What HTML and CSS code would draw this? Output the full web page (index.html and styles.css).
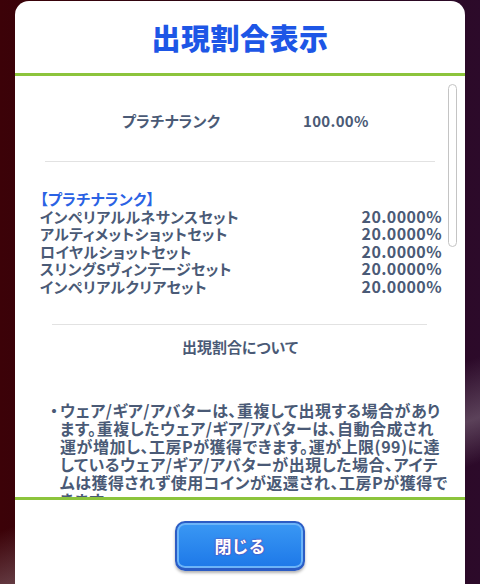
FILE: index.html
```html
<!DOCTYPE html>
<html lang="ja">
<head>
    <meta charset="UTF-8">
    <meta name="viewport" content="width=device-width, initial-scale=1.0">
    <title>出現割合表示</title>
    <link rel="stylesheet" href="styles.css">
</head>
<body>

    <div class="dialog">
        <div class="dialog-head">
            <h1>出現割合表示</h1>
        </div>

        <div class="dialog-body">
            <div class="rank-row">
                <span>プラチナランク</span>
                <span>100.00%</span>
            </div>

            <hr class="divider">

            <div class="rate-list">
                <div class="rate-group">【プラチナランク】</div>
                <div class="rate-row"><span>インペリアルルネサンスセット</span><span class="rate">20.0000%</span></div>
                <div class="rate-row"><span>アルティメットショットセット</span><span class="rate">20.0000%</span></div>
                <div class="rate-row"><span>ロイヤルショットセット</span><span class="rate">20.0000%</span></div>
                <div class="rate-row"><span>スリングSヴィンテージセット</span><span class="rate">20.0000%</span></div>
                <div class="rate-row"><span>インペリアルクリアセット</span><span class="rate">20.0000%</span></div>
            </div>

            <hr class="divider divider-narrow">

            <h2>出現割合について</h2>

            <p class="note">
                <span class="note-mark">・</span>
                <span>ウェア/ギア/アバターは、重複して出現する場合があり<br>ます。重複したウェア/ギア/アバターは、自動合成され<br>運が増加し、工房Pが獲得できます。運が上限(99)に達<br>しているウェア/ギア/アバターが出現した場合、アイテ<br>ムは獲得されず使用コインが返還され、工房Pが獲得で<br>きます。</span>
            </p>

            <!-- スクロールバー -->
            <div class="scrollbar"></div>
        </div>

        <div class="dialog-foot">
            <button class="btn-close">閉じる</button>
        </div>
    </div>

</body>
</html>
```

FILE: styles.css
```css
body {
    margin: 0;
    padding: 0;
    height: 584px;
    overflow: hidden;
    font-family: "Noto Sans CJK JP", "Noto Sans", sans-serif;
    font-weight: bold;
    color: #4a5a76;
    background:
        linear-gradient(160deg, transparent 70%, rgba(180, 170, 180, 0.35) 78%, transparent 84%),
        linear-gradient(90deg, #3c0208 0%, #2a0412 50%, #2c0a2a 100%);
}

.dialog {
    margin: 1px 15px 0;
    height: 600px;
    background-color: white;
    border-radius: 14px 14px 0 0;
}

.dialog-head {
    height: 72px;
    border-bottom: 3px solid #8cc43c;
    display: flex;
    justify-content: center;
    align-items: center;
}

.dialog-head h1 {
    margin: 0;
    font-size: 29px;
    font-weight: 900;
    color: #1d56e6;
    letter-spacing: 0.5px;
}

.dialog-body {
    position: relative;
    height: 421px;
    overflow: hidden;
    border-bottom: 3px solid #8cc43c;
    font-size: 15px;
    font-feature-settings: "palt";
}

.rank-row {
    display: grid;
    grid-template-columns: 181px 1fr;
    padding: 35px 0 0 107px;
    line-height: 20px;
    letter-spacing: 0.3px;
}

.divider {
    margin: 30px 30px 0;
    border: none;
    border-top: 1px solid #e2e2e2;
}

.divider-narrow {
    margin: 29px 38px 0 37px;
}

.rate-list {
    margin-top: 28px;
    padding: 0 24px 0 25px;
    line-height: 17.5px;
    letter-spacing: 0.35px;
}

.rate-group {
    color: #2a62e4;
}

.rate-row {
    display: flex;
    justify-content: space-between;
}

.rate-row .rate {
    font-size: 16px;
    letter-spacing: 0.4px;
    margin-right: -1px;
}

.dialog-body h2 {
    margin: 12px 0 0;
    font-size: 15px;
    line-height: 20px;
    text-align: center;
}

.note {
    display: flex;
    margin: 44px 0 0;
    padding: 0 10px 0 35px;
    font-size: 16px;
    letter-spacing: 0.5px;
    line-height: 18px;
    white-space: nowrap;
}

.note-mark {
    width: 10px;
    flex-shrink: 0;
}

.scrollbar {
    position: absolute;
    top: 8px;
    right: 8px;
    width: 7px;
    height: 161px;
    border: 1px solid #c4c4c4;
    border-radius: 5px;
    background-color: white;
}

.dialog-foot {
    display: flex;
    justify-content: center;
    padding-top: 21px;
}

.btn-close {
    width: 130px;
    height: 50px;
    font-family: inherit;
    font-size: 17px;
    font-weight: bold;
    color: white;
    text-shadow: 0 0 2px #6a3aa8, 0 0 1px #6a3aa8;
    background: linear-gradient(#3a98f4, #1d78e8);
    border: 2px solid #2c5cc4;
    border-bottom-width: 3px;
    border-radius: 10px;
    box-shadow: inset 0 0 0 2px #6cb4f8, 0 2px 3px rgba(0, 0, 0, 0.3);
    cursor: pointer;
}
```
